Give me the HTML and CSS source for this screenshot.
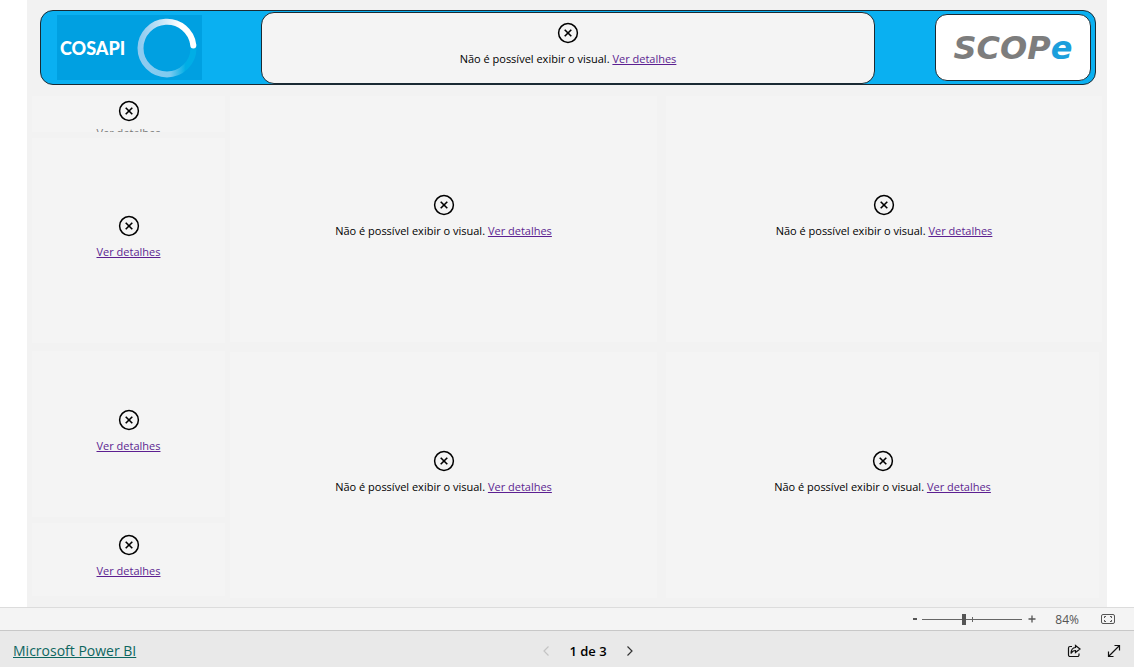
FILE: index.html
```html
<!DOCTYPE html>
<html lang="pt">
<head>
<meta charset="utf-8">
<title>Microsoft Power BI</title>
<link rel="stylesheet" href="styles.css">
</head>
<body>
<svg class="defs" aria-hidden="true">
  <symbol id="error" viewBox="0 0 22 22">
    <circle cx="11" cy="11" r="9.4" fill="none" stroke="#000" stroke-width="1.5"/>
    <path d="M7.7 7.7l6.6 6.6M14.3 7.7l-6.6 6.6" stroke="#000" stroke-width="1.6"/>
  </symbol>
</svg>
<main class="report">
  <header class="banner">
    <div class="cosapi">
      <span>COSAPI</span>
      <svg class="ring" viewBox="0 0 60 60" aria-hidden="true">
        <defs>
          <linearGradient id="g1" x1="0" y1="0" x2="1" y2="0"><stop offset="0" stop-color="#8fcbf0"/><stop offset=".45" stop-color="#cfe8f8"/><stop offset=".75" stop-color="#fff"/></linearGradient>
          <linearGradient id="g2" x1="0" y1="0" x2="1" y2="0"><stop offset="0" stop-color="#8fcbf0"/><stop offset=".55" stop-color="#7fcbef"/><stop offset=".85" stop-color="#00aee6"/><stop offset="1" stop-color="#00aee6"/></linearGradient>
        </defs>
        <path d="M3.500 30A26.500 26.500 0 0 0 56.500 30" fill="none" stroke="url(#g2)" stroke-width="6"/>
        <path d="M3.500 30A26.500 26.500 0 0 1 56.300 27" fill="none" stroke="url(#g1)" stroke-width="6"/>
        <circle cx="56.300" cy="27.500" r="3" fill="#fff"/>
      </svg>
    </div>
    <section class="banner-visual message">
      <svg class="error-icon"><use href="#error"/></svg>
      <p>Não é possível exibir o visual. <a href="#">Ver detalhes</a></p>
    </section>
    <div class="scope"><span>SCOP<b>e</b></span></div>
  </header>
  <div class="columns">
    <div class="column side">
      <section class="tile message clipped"><svg class="error-icon"><use href="#error"/></svg><p><a href="#">Ver detalhes</a></p></section>
      <section class="tile message side-a"><svg class="error-icon"><use href="#error"/></svg><p><a href="#">Ver detalhes</a></p></section>
      <section class="tile message side-b"><svg class="error-icon"><use href="#error"/></svg><p><a href="#">Ver detalhes</a></p></section>
      <section class="tile message side-c"><svg class="error-icon"><use href="#error"/></svg><p><a href="#">Ver detalhes</a></p></section>
    </div>
    <div class="column middle">
      <section class="tile message"><svg class="error-icon"><use href="#error"/></svg><p>Não é possível exibir o visual. <a href="#">Ver detalhes</a></p></section>
      <section class="tile message"><svg class="error-icon"><use href="#error"/></svg><p>Não é possível exibir o visual. <a href="#">Ver detalhes</a></p></section>
    </div>
    <div class="column right">
      <section class="tile message"><svg class="error-icon"><use href="#error"/></svg><p>Não é possível exibir o visual. <a href="#">Ver detalhes</a></p></section>
      <section class="tile message narrow"><svg class="error-icon"><use href="#error"/></svg><p>Não é possível exibir o visual. <a href="#">Ver detalhes</a></p></section>
    </div>
  </div>
</main>
<div class="zoombar">
  <button type="button" class="step" aria-label="Reduzir"><svg width="10" height="10"><path d="M3 5h4" stroke="#555" stroke-width="2"/></svg></button>
  <input class="zoom" type="range" min="0" max="100" value="42" aria-label="Zoom">
  <button type="button" class="step" aria-label="Ampliar"><svg width="10" height="10"><path d="M1.500 5h7M5 1.500v7" stroke="#555" stroke-width="1.300"/></svg></button>
  <output class="percent">84%</output>
  <button type="button" class="fit" aria-label="Ajustar à página"><svg width="16" height="12" fill="none" stroke="#555"><rect x="1.500" y="1.500" width="13" height="9" rx="1.500"/><path d="M6 3.500H4.500V5M10 3.500h1.500V5M4.500 7v1.500H6M11.500 7v1.500H10"/></svg></button>
</div>
<footer class="footer">
  <a class="brand" href="#">Microsoft Power BI</a>
  <nav class="pager">
    <button type="button" disabled aria-label="Anterior"><svg width="8" height="12" fill="none" stroke="#c4c4c4" stroke-width="1.200"><path d="M6.500 1.500L2 6l4.500 4.500"/></svg></button>
    <span>1 de 3</span>
    <button type="button" aria-label="Próxima"><svg width="8" height="12" fill="none" stroke="#333" stroke-width="1.200"><path d="M1.500 1.500L6 6l-4.500 4.500"/></svg></button>
  </nav>
  <div class="actions">
    <button type="button" aria-label="Compartilhar"><svg width="14" height="14" fill="none" stroke="#111" stroke-width="1.200"><path d="M5 2.500H3A1.500 1.500 0 0 0 1.500 4v7A1.500 1.500 0 0 0 3 12.500h7.500A1.500 1.500 0 0 0 12 11V9.500"/><path d="M8.500 1.500l4.500 3.500-4.500 3.500V6.500C6 6.500 5 7.500 4 9.500 4 6 5.500 3.800 8.500 3.500z"/></svg></button>
    <button type="button" aria-label="Tela inteira"><svg width="14" height="14" fill="none" stroke="#111" stroke-width="1.200"><path d="M1.500 12.500l11-11M7.500 1.500h5v5M1.500 7.500v5h5"/></svg></button>
  </div>
</footer>
</body>
</html>
```
FILE: styles.css
```css
* { box-sizing: border-box; }
body {
  margin: 0;
  min-height: 100vh;
  display: flex;
  flex-direction: column;
  background: #fff;
  color: #000;
  font-family: "Segoe UI", "Open Sans", "Noto Sans", sans-serif;
  font-size: 12px;
}
.defs { display: none; }
button { padding: 0; border: 0; background: none; display: flex; align-items: center; justify-content: center; }
p { margin: 0; }

.report {
  flex: 1;
  display: flex;
  flex-direction: column;
  margin: 0 27px;
  padding: 10px 5px 9px;
  background: #f2f2f2;
}
.banner {
  display: flex;
  align-items: center;
  height: 75px;
  margin: 0 6px 0 8px;
  padding: 0 4px 0 16px;
  border: 1px solid #1a2a33;
  border-radius: 13px;
  background: #0ab0f1;
}
.cosapi {
  display: flex;
  align-items: center;
  justify-content: space-between;
  width: 145px;
  height: 65px;
  padding: 0 5px 0 3px;
  background: #00a0e1;
  color: #fff;
  font-family: Lato, sans-serif;
  font-size: 18px;
  font-weight: 900;
}
.ring { width: 60px; height: 60px; }
.banner-visual {
  flex: 1;
  height: 72px;
  margin: 0 60px 0 59px;
  border: 1px solid #1a2a33;
  border-radius: 13px;
  background: #f4f4f4;
}
.scope {
  display: flex;
  align-items: center;
  justify-content: center;
  width: 156px;
  height: 67px;
  border: 1px solid #1a2a33;
  border-radius: 12px;
  background: #fff;
  color: #7d7d7d;
  font: italic bold 32px "DejaVu Sans", sans-serif;
}
.scope b { color: #1b9fdc; }

.message {
  display: flex;
  flex-direction: column;
  align-items: center;
  justify-content: center;
  gap: 7px;
  padding-bottom: 6px;
  font-size: 11px;
  line-height: 16px;
  white-space: nowrap;
}
.error-icon { width: 22px; height: 22px; flex: none; }
.message a { color: #5c1f91; }

.columns { flex: 1; display: flex; padding-top: 11px; }
.column { display: flex; flex-direction: column; min-width: 0; gap: 10px; }
.side { flex: 193; margin-right: 5px; gap: 6px; padding-bottom: 2px; }
.middle { flex: 427; margin-right: 9px; }
.right { flex: 436; }
.tile { flex: 1 1 0; min-height: 0; background: #f4f4f4; }
.clipped { flex: none; height: 36px; justify-content: flex-start; gap: 3px; padding: 4px 0 0; overflow: hidden; }
.clipped a { color: #777; }
.side-a { flex-grow: 199; }
.side-b { flex-grow: 160; margin-top: 2px; }
.side-c { flex-grow: 67; }
.narrow { margin-right: 3px; }

.zoombar {
  display: flex;
  align-items: center;
  justify-content: flex-end;
  height: 24px;
  padding-right: 18px;
  border-top: 1px solid #dcdcdc;
  border-bottom: 1px solid #c8c8c8;
  background: #f4f4f4;
  color: #555;
}
.step { width: 10px; height: 20px; }
.zoom {
  appearance: none;
  width: 100px;
  height: 12px;
  margin: 0 5px 0 2px;
  background:
    linear-gradient(#666, #666) 50px 4px / 1px 5px no-repeat,
    linear-gradient(#666, #666) 0 6px / 100% 1px no-repeat;
}
.zoom::-webkit-slider-thumb { appearance: none; width: 4px; height: 11px; background: #555; }
.zoom::-moz-range-thumb { width: 4px; height: 11px; border: 0; border-radius: 0; background: #555; }
.percent { width: 42px; text-align: right; }
.fit { margin-left: 21px; }

.footer {
  display: grid;
  grid-template-columns: 1fr auto 1fr;
  align-items: center;
  height: 36px;
  padding: 3px 13px 0;
  background: #e9e9e9;
}
.brand { justify-self: start; color: #0d6660; font-size: 14px; }
.pager { display: flex; align-items: center; margin-left: 42px; gap: 19px; font-size: 13px; font-weight: 600; }
.actions { display: flex; justify-content: flex-end; gap: 26px; }
```
